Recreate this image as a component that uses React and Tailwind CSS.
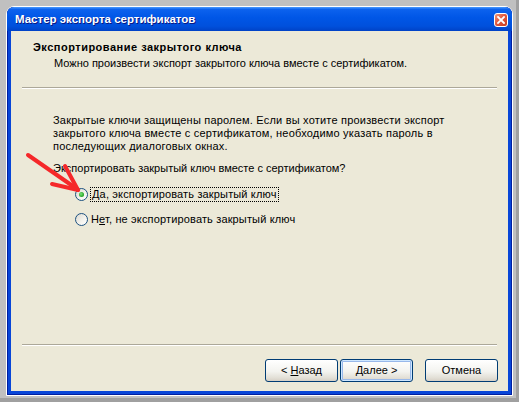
import React from 'react'

const XpButton = ({ children, isDefault }) => (
  <button
    type="button"
    className={
      isDefault
        ? "w-[73px] h-[23px] rounded-[3px] border border-[#003c74] bg-[linear-gradient(to_bottom,#ffffff_0%,#f3f3ef_55%,#e2dfd6_85%,#d6d0c5_100%)] shadow-[inset_0_0_0_1px_#cee7ff,inset_0_0_0_2px_#98b8ea] text-[11px] leading-none text-black flex items-center justify-center"
        : "w-[73px] h-[23px] rounded-[3px] border border-[#003c74] bg-[linear-gradient(to_bottom,#ffffff_0%,#f3f3ef_55%,#e2dfd6_85%,#d6d0c5_100%)] text-[11px] leading-none text-black flex items-center justify-center"
    }
  >
    <span className="whitespace-pre">{children}</span>
  </button>
)

const Radio = ({ checked }) => (
  <span className="w-[13px] h-[13px] shrink-0 rounded-full border border-[#1c5180] bg-[linear-gradient(135deg,#dcd9cf_0%,#f5f4ef_60%,#ffffff_100%)] flex items-center justify-center">
    {checked && (
      <span className="w-[5px] h-[5px] rounded-full bg-[radial-gradient(circle_at_40%_40%,#7be37a_0%,#21a121_70%,#1a8a1a_100%)]" />
    )}
  </span>
)

export default function App() {
  return (
    <div className="relative w-[519px] h-[402px] overflow-hidden bg-[#c0c0c0] border-r-[3px] border-b-[4px] border-[#a0a0a0] pl-[6px] pt-[6px] font-['Liberation_Sans',Arial,sans-serif] text-black">
      {/* Window */}
      <div className="w-[507px] h-[390px] border border-white rounded-t-[8px] flex flex-col">
        <div className="flex-1 flex flex-col rounded-t-[7px] bg-[#0846d8] shadow-[inset_1px_0_#001ea0,inset_-1px_0_#001ea0,inset_0_-1px_#001ea0]">
          {/* Title bar */}
          <div className="h-[24px] shrink-0 rounded-t-[7px] bg-[linear-gradient(to_bottom,#4a9bff_0%,#0c62ee_10%,#0056e6_45%,#0050dc_80%,#0042c6_100%)] flex items-center justify-between pl-[8px] pr-[4px]">
            <span className="text-[11.5px] font-bold text-white [text-shadow:1px_1px_0_#0a1883] leading-none pt-[1px]">
              Мастер экспорта сертификатов
            </span>
            <span className="w-[14px] h-[14px] mt-[1px] rounded-[3px] border border-white bg-[linear-gradient(135deg,#f0977a_0%,#e2583e_45%,#c73d20_100%)] flex items-center justify-center">
              <svg width="8" height="8" viewBox="0 0 8 8">
                <path d="M1 1 L7 7 M7 1 L1 7" stroke="#fff" strokeWidth="1.8" strokeLinecap="square" />
              </svg>
            </span>
          </div>

          {/* Body */}
          <div className="flex-1 mx-[4px] mb-[4px] bg-[#ece9d8] flex flex-col">
            {/* Header */}
            <div className="h-[56px] shrink-0 pt-[10px]">
              <div className="pl-[22px] text-[11px] leading-[13px] font-bold tracking-[0.5px]">
                Экспортирование закрытого ключа
              </div>
              <div className="pl-[43px] mt-[3px] text-[11px] leading-[13px]">
                Можно произвести экспорт закрытого ключа вместе с сертификатом.
              </div>
            </div>
            <div className="mx-[11px] h-[2px] border-t border-[#aca899] border-b border-b-white" />

            {/* Content */}
            <div className="pl-[42px] pt-[25px] text-[11px] leading-[13px]">
              <p className="tracking-[0.2px]">
                Закрытые ключи защищены паролем. Если вы хотите произвести экспорт
                <br />
                закрытого ключа вместе с сертификатом, необходимо указать пароль в
                <br />
                последующих диалоговых окнах.
              </p>
              <p className="mt-[9px]">Экспортировать закрытый ключ вместе с сертификатом?</p>

              <div className="mt-[11px] pl-[22px] flex flex-col gap-[8px] tracking-[0.15px]">
                <label className="h-[17px] flex items-center gap-[2px]">
                  <Radio checked />
                  <span className="border border-dotted border-black px-[1px] leading-[13px]">
                    <u>Д</u>а, экспортировать закрытый ключ
                  </span>
                </label>
                <label className="h-[17px] flex items-center gap-[3px]">
                  <Radio />
                  <span className="leading-[13px]">
                    Н<u>е</u>т, не экспортировать закрытый ключ
                  </span>
                </label>
              </div>
            </div>

            <div className="flex-1" />

            {/* Footer */}
            <div className="mx-[11px] h-[2px] border-t border-[#aca899] border-b border-b-white" />
            <div className="flex justify-end pt-[13px] pb-[9px] pr-[10px]">
              <div className="flex gap-[2px]">
                <XpButton>
                  {'< '}<u>Н</u>азад
                </XpButton>
                <XpButton isDefault>
                  <u>Д</u>{'алее >'}
                </XpButton>
              </div>
              <div className="ml-[12px]">
                <XpButton>Отмена</XpButton>
              </div>
            </div>
          </div>
        </div>
      </div>

      {/* Red annotation arrow */}
      <svg className="absolute left-0 top-0 pointer-events-none" width="519" height="402" viewBox="0 0 519 402">
        <g stroke="#f5282a" strokeWidth="4" strokeLinecap="round" fill="none">
          <path d="M28 155 L77 189" />
          <path d="M65 166 L78 190" />
          <path d="M52 184 L78 190" />
        </g>
      </svg>
    </div>
  )
}
